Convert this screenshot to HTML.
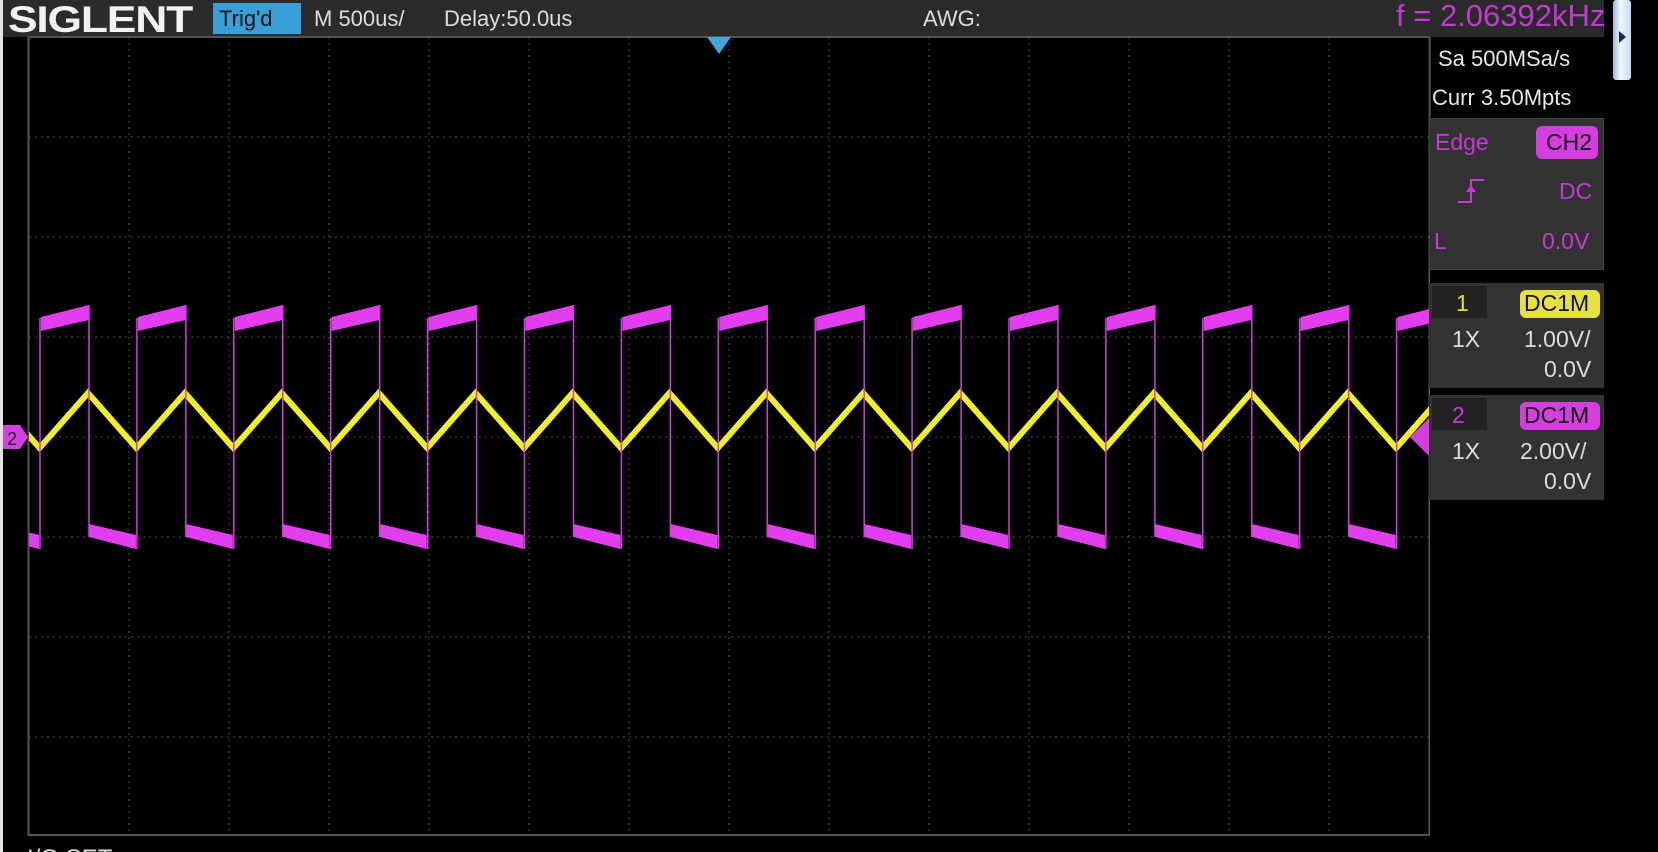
<!DOCTYPE html>
<html style="margin:0;width:1658px;height:852px;overflow:hidden"><head><meta charset="utf-8"><style>
body{margin:0;width:1658px;height:852px;background:#000;overflow:hidden;position:relative;font-family:"Liberation Sans",sans-serif}
.a{position:absolute;white-space:nowrap}
</style></head><body>
<div class="a" style="left:0;top:0;width:3px;height:852px;background:#e4e4e4"></div>
<div class="a" style="left:3px;top:0;width:1601px;height:37px;background:#2b2b2b"></div>
<div class="a" style="left:8px;top:-1px;font-size:37px;font-weight:bold;color:#f2f2f2;letter-spacing:-1px;transform:scaleX(1.2);transform-origin:left">SIGLENT</div>
<div class="a" style="left:213px;top:3px;width:88px;height:31px;background:#3a9fd6"></div>
<div class="a" style="left:219px;top:6px;font-size:22px;color:#111">Trig'd</div>
<div class="a" style="left:314px;top:6px;font-size:22px;color:#ddd">M 500us/</div>
<div class="a" style="left:444px;top:6px;font-size:22px;color:#ddd">Delay:50.0us</div>
<div class="a" style="left:923px;top:6px;font-size:22px;color:#ddd">AWG:</div>
<div class="a" style="left:1396px;top:-2px;font-size:31px;color:#c23ad2">f = 2.06392kHz</div>
<div class="a" style="left:1613px;top:0;width:18px;height:80px;background:linear-gradient(90deg,#9ab8d8,#f0f6fc 40%,#c8daf0);border-radius:3px"></div>
<div class="a" style="left:1619px;top:31px;width:0;height:0;border-left:7px solid #1a2a4a;border-top:6px solid transparent;border-bottom:6px solid transparent"></div>

<svg class="a" style="left:0;top:0" width="1430" height="852">
<g stroke="#4a4a4a" stroke-width="1" stroke-dasharray="2,4">
<line x1="129" y1="37" x2="129" y2="836"/><line x1="229" y1="37" x2="229" y2="836"/><line x1="329" y1="37" x2="329" y2="836"/><line x1="429" y1="37" x2="429" y2="836"/><line x1="529" y1="37" x2="529" y2="836"/><line x1="629" y1="37" x2="629" y2="836"/><line x1="729" y1="37" x2="729" y2="836"/><line x1="829" y1="37" x2="829" y2="836"/><line x1="929" y1="37" x2="929" y2="836"/><line x1="1029" y1="37" x2="1029" y2="836"/><line x1="1129" y1="37" x2="1129" y2="836"/><line x1="1229" y1="37" x2="1229" y2="836"/><line x1="1329" y1="37" x2="1329" y2="836"/>
<line x1="29" y1="137" x2="1429" y2="137"/><line x1="29" y1="237" x2="1429" y2="237"/><line x1="29" y1="337" x2="1429" y2="337"/><line x1="29" y1="437" x2="1429" y2="437"/><line x1="29" y1="537" x2="1429" y2="537"/><line x1="29" y1="637" x2="1429" y2="637"/><line x1="29" y1="737" x2="1429" y2="737"/>
</g>
<rect x="28.5" y="37" width="1401" height="798" fill="none" stroke="#555" stroke-width="2"/>
<g id="w"></g>
<polygon points="1410,437 1429,418 1429,456" fill="#d63ee0"/>
<polygon points="3,425 20,425 28,437 20,449 3,449" fill="#d63ee0"/>
<text x="7" y="445" font-size="18" fill="#222" font-family="Liberation Sans">2</text>
<polygon points="707,37 731,37 719,54" fill="#3fa6e0"/>
<text x="27" y="866" font-size="24" fill="#ddd" font-family="Liberation Sans">I/O SET</text>
</svg>

<div class="a" style="left:1429px;top:37px;width:175px;height:80px;background:#000;border-left:2px solid #444"></div>
<div class="a" style="left:1438px;top:46px;font-size:22px;color:#e8e8e8">Sa 500MSa/s</div>
<div class="a" style="left:1432px;top:85px;font-size:22px;color:#e8e8e8">Curr 3.50Mpts</div>
<div class="a" style="left:1429px;top:118px;width:175px;height:152px;background:#333;border:1px solid #444;box-sizing:border-box"></div>
<div class="a" style="left:1435px;top:129px;font-size:23px;color:#c63ad6">Edge</div>
<div class="a" style="left:1536px;top:126px;width:62px;height:33px;background:#d63ee0;border-radius:6px"></div>
<div class="a" style="left:1546px;top:129px;font-size:23px;color:#111">CH2</div>
<svg class="a" style="left:1456px;top:176px" width="40" height="30"><path d="M2 26 H15 V4 H28" stroke="#c63ad6" stroke-width="2" fill="none"/><polygon points="10,16 20,16 15,9" fill="#c63ad6"/></svg>
<div class="a" style="left:1559px;top:178px;font-size:23px;color:#c63ad6">DC</div>
<div class="a" style="left:1434px;top:228px;font-size:23px;color:#c63ad6">L</div>
<div class="a" style="left:1542px;top:228px;font-size:23px;color:#c63ad6">0.0V</div>

<div class="a" style="left:1429px;top:283px;width:175px;height:105px;background:#333"></div>
<div class="a" style="left:1432px;top:286px;width:55px;height:32px;background:#222"></div>
<div class="a" style="left:1456px;top:290px;font-size:23px;color:#e0e040">1</div>
<div class="a" style="left:1520px;top:290px;width:80px;height:28px;background:#e6e040;border-radius:6px"></div>
<div class="a" style="left:1524px;top:290px;font-size:23px;color:#111">DC1M</div>
<div class="a" style="left:1452px;top:326px;font-size:23px;color:#ddd">1X</div>
<div class="a" style="left:1524px;top:326px;font-size:23px;color:#ddd">1.00V/</div>
<div class="a" style="left:1544px;top:356px;font-size:23px;color:#ddd">0.0V</div>

<div class="a" style="left:1429px;top:395px;width:175px;height:105px;background:#333"></div>
<div class="a" style="left:1432px;top:398px;width:55px;height:32px;background:#222"></div>
<div class="a" style="left:1452px;top:402px;font-size:23px;color:#c63ad6">2</div>
<div class="a" style="left:1520px;top:402px;width:80px;height:28px;background:#d63ee0;border-radius:6px"></div>
<div class="a" style="left:1524px;top:402px;font-size:23px;color:#111">DC1M</div>
<div class="a" style="left:1452px;top:438px;font-size:23px;color:#ddd">1X</div>
<div class="a" style="left:1520px;top:438px;font-size:23px;color:#ddd">2.00V/</div>
<div class="a" style="left:1544px;top:468px;font-size:23px;color:#ddd">0.0V</div>

<script>
var P=96.9,h=P/2,g=document.getElementById('w'),s='';
var tri='M29,437';
for(var k=-1;k<16;k++){var pk=88+P*k,tr=pk+h;
 tri+=' L'+pk+',393 L'+tr+',448';}
s+='<path d="'+tri+'" stroke="#f2ef2a" stroke-width="6" fill="none"/>';
var m='';
for(var k=-1;k<16;k++){var r=40+P*k,f=89+P*k,r2=r+P;
 m+='<polygon points="'+(r+1)+',317 '+f+',305 '+f+',320 '+(r+1)+',331" fill="#e23ef0"/>';
 m+='<polygon points="'+f+',524 '+(r2-1)+',535 '+(r2-1)+',549 '+f+',537" fill="#e23ef0"/>';
 m+='<line x1="'+r+'" y1="318" x2="'+r+'" y2="549" stroke="#d03ee0" stroke-width="1.5"/>';
 m+='<line x1="'+f+'" y1="305" x2="'+f+'" y2="537" stroke="#d03ee0" stroke-width="1.5"/>';}
s+=m;
g.innerHTML='<svg x="0" y="0"><clipPath id="c"><rect x="29" y="38" width="1400" height="797"/></clipPath><g clip-path="url(#c)">'+s+'</g></svg>';
</script>
</body></html>
